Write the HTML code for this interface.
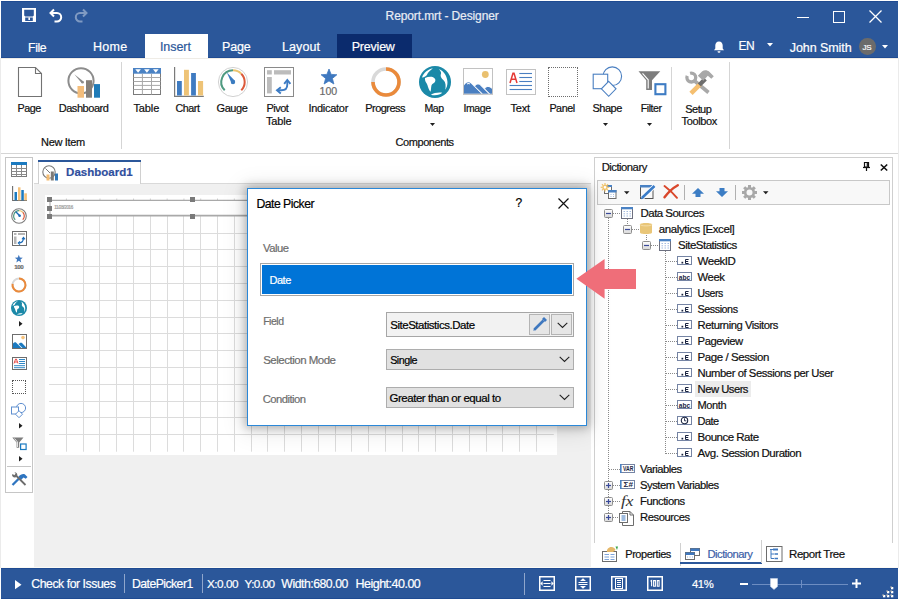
<!DOCTYPE html>
<html><head><meta charset="utf-8"><style>
*{margin:0;padding:0;box-sizing:border-box}
html,body{width:899px;height:600px;overflow:hidden;background:#fff;font-family:"Liberation Sans",sans-serif;position:relative}
.a{position:absolute;display:block}
.t{position:absolute;white-space:nowrap;line-height:1;-webkit-text-stroke:0.2px currentColor}
svg{overflow:visible}
</style></head><body>
<div class="a" style="left:0px;top:0px;width:899px;height:600px;background:#fff;"></div>
<div class="a" style="left:0px;top:58px;width:1px;height:510px;background:#ebebeb;"></div>
<div class="a" style="left:898px;top:58px;width:1px;height:510px;background:#ebebeb;"></div>
<div class="a" style="left:1px;top:1px;width:897px;height:57px;background:#2b579a;"></div>
<div class="a" style="left:1px;top:1px;width:897px;height:1px;background:#1f4b92;"></div>
<div class="a" style="left:1px;top:57px;width:897px;height:1px;background:#1f4b92;"></div>
<div class="a" style="left:1px;top:58px;width:897px;height:1px;background:#efece6;"></div>
<svg class="a" style="left:22px;top:8px;" width="14" height="14" viewBox="0 0 14 14"><path fill="#fff" fill-rule="evenodd" d="M0 0H14V14H0Z M2.2 1.8V7.6L3.2 8.6H10.8L11.8 7.6V1.8Z M3.2 9.6V13H10.8V9.6Z"/><rect x="6.4" y="9.4" width="1.6" height="2.6" fill="#fff"/></svg>
<svg class="a" style="left:49px;top:8px;" width="14" height="14" viewBox="0 0 14 14"><path d="M5 1.5 L1.5 5 L5 8.5 M1.8 5 H8 A4.2 4.2 0 0 1 8 13.4 H5.5" fill="none" stroke="#fff" stroke-width="2"/></svg>
<svg class="a" style="left:74px;top:8px;opacity:.4" width="14" height="14" viewBox="0 0 14 14"><path d="M9 1.5 L12.5 5 L9 8.5 M12.2 5 H6 A4.2 4.2 0 0 0 6 13.4 H8.5" fill="none" stroke="#fff" stroke-width="2"/></svg>
<div class="t" style="left:385.60px;top:10.00px;font-size:12px;color:#e8ecf4;letter-spacing:-0.107px;">Report.mrt - Designer</div>
<div class="a" style="left:797px;top:17px;width:12px;height:1px;background:#fff;"></div>
<div class="a" style="left:833px;top:11px;width:12px;height:12px;border:1px solid #fff;"></div>
<svg class="a" style="left:869px;top:10px;" width="13" height="13" viewBox="0 0 13 13"><path d="M0.5 0.5L12.5 12.5M12.5 0.5L0.5 12.5" stroke="#fff" stroke-width="1.3"/></svg>
<div class="a" style="left:145px;top:34px;width:63px;height:24px;background:#fff;"></div>
<div class="a" style="left:337px;top:34px;width:75px;height:24px;background:#0b2b6d;"></div>
<div class="t" style="left:28.10px;top:42.00px;font-size:12.25px;color:#fff;letter-spacing:-0.450px;">File</div>
<div class="t" style="left:93.00px;top:41.00px;font-size:12.5px;color:#fff;letter-spacing:0.317px;">Home</div>
<div class="t" style="left:159.90px;top:41.00px;font-size:12.5px;color:#2b579a;letter-spacing:-0.050px;">Insert</div>
<div class="t" style="left:222.00px;top:41.00px;font-size:12.5px;color:#fff;letter-spacing:-0.167px;">Page</div>
<div class="t" style="left:282.00px;top:41.00px;font-size:12.5px;color:#fff;letter-spacing:0.090px;">Layout</div>
<div class="t" style="left:351.70px;top:41.00px;font-size:12.5px;color:#fff;letter-spacing:-0.208px;">Preview</div>
<svg class="a" style="left:713px;top:41px;" width="12" height="12" viewBox="0 0 12 12"><path fill="#fff" d="M6 0.5C3.5 0.5 2.3 2.5 2.3 4.5V7.5L1 9.3H11L9.7 7.5V4.5C9.7 2.5 8.5 0.5 6 0.5Z"/><path fill="#fff" d="M4.5 10.2H7.5A1.5 1.5 0 0 1 4.5 10.2Z"/></svg>
<div class="t" style="left:738.40px;top:40.00px;font-size:12.0px;color:#fff;letter-spacing:-0.450px;">EN</div>
<svg class="a" style="left:767px;top:43px;" width="6" height="4" viewBox="0 0 6 4"><path d="M0 0H6L3 3.5Z" fill="#fff"/></svg>
<div class="t" style="left:789.80px;top:42.00px;font-size:12.5px;color:#fff;letter-spacing:-0.072px;">John Smith</div>
<div class="a" style="left:859px;top:38px;width:16.5px;height:16.5px;border-radius:50%;background:#6b6b6b"></div>
<div class="t" style="left:862.50px;top:44.00px;font-size:8px;color:#fff;letter-spacing:-0.350px;">JS</div>
<svg class="a" style="left:882px;top:45px;" width="6" height="4" viewBox="0 0 6 4"><path d="M0 0H6L3 3.5Z" fill="#fff"/></svg>
<div class="a" style="left:1px;top:153px;width:897px;height:1px;background:#d5d5d5;"></div>
<div class="t" style="left:17.60px;top:103.00px;font-size:10.75px;color:#101010;letter-spacing:-0.500px;">Page</div>
<div class="t" style="left:58.70px;top:103.00px;font-size:11px;color:#101010;letter-spacing:-0.450px;">Dashboard</div>
<div class="t" style="left:133.40px;top:103.00px;font-size:11px;color:#101010;letter-spacing:-0.100px;">Table</div>
<div class="t" style="left:175.60px;top:103.00px;font-size:10.75px;color:#101010;letter-spacing:-0.500px;">Chart</div>
<div class="t" style="left:216.50px;top:103.00px;font-size:11px;color:#101010;letter-spacing:-0.412px;">Gauge</div>
<div class="t" style="left:266.60px;top:103.00px;font-size:11px;color:#101010;letter-spacing:-0.562px;">Pivot</div>
<div class="t" style="left:266.00px;top:116.00px;font-size:11px;color:#101010;letter-spacing:-0.200px;">Table</div>
<div class="t" style="left:308.40px;top:103.00px;font-size:11px;color:#101010;letter-spacing:-0.275px;">Indicator</div>
<div class="t" style="left:365.30px;top:103.00px;font-size:11px;color:#101010;letter-spacing:-0.557px;">Progress</div>
<div class="t" style="left:424.50px;top:103.00px;font-size:10.5px;color:#101010;letter-spacing:-0.475px;">Map</div>
<div class="t" style="left:463.50px;top:103.00px;font-size:10.5px;color:#101010;letter-spacing:-0.425px;">Image</div>
<div class="t" style="left:510.50px;top:103.00px;font-size:11px;color:#101010;letter-spacing:-0.217px;">Text</div>
<div class="t" style="left:549.40px;top:103.00px;font-size:10.75px;color:#101010;letter-spacing:-0.450px;">Panel</div>
<div class="t" style="left:592.40px;top:103.00px;font-size:11px;color:#101010;letter-spacing:-0.450px;">Shape</div>
<div class="t" style="left:640.80px;top:103.00px;font-size:10.5px;color:#101010;letter-spacing:-0.450px;">Filter</div>
<div class="t" style="left:685.30px;top:104.00px;font-size:11px;color:#101010;letter-spacing:-0.562px;">Setup</div>
<div class="t" style="left:681.50px;top:116.00px;font-size:11px;color:#101010;letter-spacing:-0.350px;">Toolbox</div>
<div class="t" style="left:41.10px;top:137.00px;font-size:11px;color:#101010;letter-spacing:-0.350px;">New Item</div>
<div class="t" style="left:395.60px;top:137.00px;font-size:11px;color:#101010;letter-spacing:-0.439px;">Components</div>
<div class="a" style="left:121px;top:62px;width:1px;height:87px;background:#d5d5d5;"></div>
<div class="a" style="left:671px;top:67px;width:1px;height:63px;background:#d5d5d5;"></div>
<div class="a" style="left:729px;top:62px;width:1px;height:87px;background:#d5d5d5;"></div>
<svg class="a" style="left:430.0px;top:123px;" width="5" height="3" viewBox="0 0 5 3"><path d="M0 0H5L2.5 3Z" fill="#1e1e1e"/></svg>
<svg class="a" style="left:603.0px;top:123px;" width="5" height="3" viewBox="0 0 5 3"><path d="M0 0H5L2.5 3Z" fill="#1e1e1e"/></svg>
<svg class="a" style="left:647.0px;top:123px;" width="5" height="3" viewBox="0 0 5 3"><path d="M0 0H5L2.5 3Z" fill="#1e1e1e"/></svg>
<svg class="a" style="left:17px;top:66px;" width="27" height="33" viewBox="0 0 27 33"><path d="M1.5 1.5H18.5L24.5 7.5V30.5H1.5Z M18.5 1.5V7.5H24.5" fill="#fff" stroke="#737373" stroke-width="1.1" stroke-linejoin="miter"/></svg>
<svg class="a" style="left:66px;top:66px;" width="36" height="34" viewBox="0 0 36 34"><circle cx="15" cy="14.8" r="12.6" fill="none" stroke="#8c8c8c" stroke-width="2"/><path d="M8.3 8.3L15.8 17.2L17.5 15.4Z" fill="#8c8c8c"/><circle cx="16.6" cy="16.3" r="1.25" fill="#8c8c8c"/><rect x="11.5" y="20" width="6.5" height="11.7" fill="#f4bd7b"/><rect x="20" y="14.2" width="6" height="17.5" fill="#857f79"/><rect x="28" y="18.1" width="6" height="13.6" fill="#1f7bb8"/></svg>
<svg class="a" style="left:133px;top:68px;" width="28" height="27" viewBox="0 0 28 27"><rect x="0.5" y="0.5" width="27" height="26" fill="#fff" stroke="#7a7a7a"/><rect x="0" y="0" width="28" height="5.7" fill="#4a82c4"/><path d="M2.3 1.3H7.9L5.1 4.8Z" fill="#fff"/><path d="M11.1 1.3H16.7L13.9 4.8Z" fill="#fff"/><path d="M20.0 1.3H25.6L22.8 4.8Z" fill="#fff"/><path d="M9.4 5.7V26.5" stroke="#a8a8a8" stroke-width="1"/><path d="M18.5 5.7V26.5" stroke="#a8a8a8" stroke-width="1"/><path d="M0.5 9.5H27.5" stroke="#a8a8a8" stroke-width="1"/><path d="M0.5 13.5H27.5" stroke="#a8a8a8" stroke-width="1"/><path d="M0.5 17.4H27.5" stroke="#a8a8a8" stroke-width="1"/><path d="M0.5 21.5H27.5" stroke="#a8a8a8" stroke-width="1"/></svg>
<svg class="a" style="left:173px;top:66px;" width="32" height="32" viewBox="0 0 32 32"><path d="M1.6 1V30.4H30.8" fill="none" stroke="#7a7a7a" stroke-width="1.2"/><rect x="4" y="15" width="4.8" height="14.5" fill="#3f7bc1"/><rect x="11" y="3.8" width="4.9" height="25.7" fill="#eec376"/><rect x="18.1" y="7" width="4.8" height="22.5" fill="#3f7bc1"/><rect x="25" y="15" width="5.1" height="14.5" fill="#eec376"/></svg>
<svg class="a" style="left:216px;top:65px;" width="34" height="34" viewBox="0 0 34 34"><circle cx="17" cy="17" r="14.6" fill="none" stroke="#d2d2d2" stroke-width="1"/><path d="M8.73 25.27A11.7 11.7 0 0 1 17.00 5.30" fill="none" stroke="#4f9a80" stroke-width="2"/><path d="M17.00 5.30A11.7 11.7 0 0 1 25.27 8.73" fill="none" stroke="#ecc46e" stroke-width="2"/><path d="M25.27 8.73A11.7 11.7 0 0 1 25.27 25.27" fill="none" stroke="#dc5a3b" stroke-width="2"/><path d="M10.7 7.199999999999999L18.8 15.8L15.8 18.8Z" fill="#3b7cc0"/><circle cx="17" cy="17" r="2.2" fill="#3b7cc0"/></svg>
<svg class="a" style="left:264px;top:67px;" width="30" height="30" viewBox="0 0 30 30"><rect x="0.5" y="0.5" width="29" height="29" fill="#fff" stroke="#8a8a8a"/><rect x="3" y="3.2" width="4.8" height="4.3" fill="#bcbcbc"/><rect x="10" y="3.2" width="17" height="4.3" fill="#bcbcbc"/><rect x="3" y="10" width="4.8" height="16.4" fill="#bcbcbc"/><path d="M23.3 14V17.5C23.3 21 21.5 23.3 17.5 23.3H13.5" fill="none" stroke="#3d7cc4" stroke-width="1.9"/><path d="M20.2 16.8L23.3 13L26.4 16.8" fill="none" stroke="#3d7cc4" stroke-width="1.9"/><path d="M16.8 20.2L13 23.3L16.8 26.4" fill="none" stroke="#3d7cc4" stroke-width="1.9"/></svg>
<svg class="a" style="left:320px;top:68px;" width="18" height="18" viewBox="0 0 18 18"><path d="M9.00,1.00 L6.88,6.39 L1.11,6.74 L5.58,10.41 L4.12,16.01 L9.00,12.90 L13.88,16.01 L12.42,10.41 L16.89,6.74 L11.12,6.39Z" fill="#3f78bf" stroke="#3f78bf" stroke-width="0.8" stroke-linejoin="round"/></svg>
<div class="t" style="left:319.60px;top:86.00px;font-size:10.6px;color:#6a6a6a;letter-spacing:-0.050px;">100</div>
<svg class="a" style="left:371px;top:66.7px;" width="30" height="30" viewBox="0 0 30 30"><circle cx="15" cy="15" r="13" fill="none" stroke="#d9d9d9" stroke-width="3.6"/><path d="M15.00 2.00A13 13 0 1 1 2.00 15.02" fill="none" stroke="#ea8a3b" stroke-width="3.6"/></svg>
<svg class="a" style="left:419px;top:66px;" width="32" height="32" viewBox="0 0 32 32"><circle cx="16.00" cy="16.00" r="16.00" fill="#1b89a8"/><path fill="#fff" d="M 3.00 11.47 C 4.67 6.67 8.67 3.33 13.87 2.13 C 11.00 4.53 9.00 6.00 8.00 8.67 C 7.33 10.13 5.33 11.07 3.00 11.47 Z M 6.00 12.00 C 8.67 10.80 11.67 10.33 14.13 11.20 C 16.33 12.13 17.00 14.13 15.87 16.00 C 14.80 17.47 13.20 17.47 12.53 19.20 C 11.87 21.47 12.27 24.00 11.47 25.67 C 9.87 24.00 9.07 21.47 8.40 19.07 C 7.73 16.80 6.00 15.47 6.00 13.47 Z M 20.00 3.07 C 24.80 5.20 28.13 10.00 28.47 16.00 C 28.60 19.33 27.60 22.00 26.13 23.87 C 27.07 20.13 26.80 16.13 24.53 14.13 C 22.13 12.13 21.33 10.53 21.73 8.80 C 22.67 6.80 21.87 5.47 20.00 3.07 Z M 11.87 28.67 C 14.67 27.20 19.33 26.13 23.20 26.80 C 21.60 28.80 16.00 29.87 11.87 28.67 Z"/></svg>
<svg class="a" style="left:463px;top:68px;" width="30" height="27" viewBox="0 0 30 27"><rect x="0.5" y="0.5" width="29" height="25.8" fill="#fff" stroke="#c2c2c2"/><circle cx="22.3" cy="6.5" r="3.4" fill="#e9c06f"/><path d="M1 17.4C2.5 15 4 14.2 5.5 14.2C6.5 14.2 7.3 14.8 8 15.5L18.5 25.8H1Z" fill="#4a7fc1"/><path d="M11.5 18.2C12.5 16.6 14 16 15.2 16C16.3 16 17 16.6 17.8 17.4L26.8 26.3H19.8Z" fill="#4a7fc1" stroke="#fff" stroke-width="1"/><path d="M21.5 20.8C22.5 19.2 24 18.4 25 18.4C26.5 18.4 28 19.5 29.5 20.8V26.3H27Z" fill="#4a7fc1" stroke="#fff" stroke-width="1"/><path d="M3.6 15.8L5.5 14.7L7.2 15.8L6.2 16.4L5.4 15.8L4.6 16.5Z" fill="#fff"/><rect x="0.5" y="0.5" width="29" height="25.8" fill="none" stroke="#c2c2c2"/></svg>
<svg class="a" style="left:506px;top:69px;" width="30" height="27" viewBox="0 0 30 27"><rect x="0.5" y="0.5" width="29" height="25" fill="#fff" stroke="#c2c2c2"/><path d="M4 14L7 4.2H8L11 14M5.1 10.3H9.9" fill="none" stroke="#e53935" stroke-width="1.5"/><path d="M13.3 4.5H26" stroke="#4a7fc1" stroke-width="1.1"/><path d="M13.3 8.5H26" stroke="#4a7fc1" stroke-width="1.1"/><path d="M13.3 12.5H26" stroke="#4a7fc1" stroke-width="1.1"/><path d="M3.6 16.5H26" stroke="#4a7fc1" stroke-width="1.1"/><path d="M3.6 20.5H26" stroke="#4a7fc1" stroke-width="1.1"/></svg>
<div class="a" style="left:548px;top:67px;width:30px;height:30px;border:1px dotted #6d6d6d;"></div>
<svg class="a" style="left:591px;top:66px;" width="32" height="32" viewBox="0 0 32 32"><circle cx="21.3" cy="10.2" r="9.3" fill="#fff" stroke="#4a7fc1" stroke-width="1.1"/><rect x="2.2" y="8.2" width="14.5" height="14.5" fill="#fff" stroke="#4a7fc1" stroke-width="1.1"/><path d="M17.7 15.3L25 22.8L17.7 30.3L10.4 22.8Z" fill="#fff" stroke="#4a7fc1" stroke-width="1.1"/></svg>
<svg class="a" style="left:638px;top:70px;" width="29" height="27" viewBox="0 0 29 27"><path d="M0.5 1.3H22.3L14 10.3V20.1H8.2V10.3Z" fill="#7d7d7d"/><path d="M4.5 3.3L10.2 9.8V18.5" fill="none" stroke="#fff" stroke-width="1.1"/><rect x="17.4" y="14.2" width="10" height="10" fill="#fff" stroke="#3e7cc4" stroke-width="2.1"/></svg>
<svg class="a" style="left:684.5px;top:69.8px;" width="29" height="25" viewBox="0 0 29 25"><path d="M8.5 10L23.5 22.5" stroke="#a8a8a8" stroke-width="3.6"/><circle cx="6.3" cy="7.6" r="4.4" fill="none" stroke="#a8a8a8" stroke-width="3.3"/><path d="M6.3 7.6L-1 4.5L3.8 -1Z" fill="#fff"/><path d="M6 23.3L15.5 13.8" stroke="#f5bf70" stroke-width="4.6"/><path d="M14.3 15L20.3 9" stroke="#6d6d6d" stroke-width="4.3"/><path d="M12.8 5.8L17 1.5C19.5 -0.3 22.3 0.2 24.3 1.8L28.8 6.3L26.3 8.8L22.8 5.8L18.3 10.8Z" fill="#a8a8a8"/></svg>
<div class="a" style="left:5px;top:157px;width:28px;height:336px;background:#fff;border:1px solid #c6c6c6;"></div>
<svg class="a" style="left:11px;top:162px;" width="16" height="15" viewBox="0 0 16 15"><rect x="0.5" y="0.5" width="15" height="14" fill="#fff" stroke="#7a7a7a"/><rect x="0" y="0" width="16" height="3" fill="#1b7ac0"/><path d="M5.5 3V14.5" stroke="#8a8a8a"/><path d="M10.5 3V14.5" stroke="#8a8a8a"/><path d="M0.5 6.5H15.5" stroke="#8a8a8a"/><path d="M0.5 9.5H15.5" stroke="#8a8a8a"/><path d="M0.5 12.5H15.5" stroke="#8a8a8a"/></svg>
<svg class="a" style="left:12px;top:185.5px;" width="15" height="15" viewBox="0 0 15 15"><path d="M0.6 0V14.5H15" fill="none" stroke="#6d6d6d" stroke-width="1.1"/><rect x="2.5" y="6" width="2.5" height="8.3" fill="#1b7ac0"/><rect x="6" y="1.3" width="2.5" height="13" fill="#f6c27b"/><rect x="9.3" y="4" width="2.5" height="10.3" fill="#1b7ac0"/><rect x="12.3" y="7.3" width="2.6" height="7" fill="#f6c27b"/></svg>
<svg class="a" style="left:11px;top:208px;" width="16" height="16" viewBox="0 0 16 16"><circle cx="8" cy="8" r="7.3" fill="none" stroke="#7d7d7d" stroke-width="1.1"/><path d="M4.25 11.75A5.3 5.3 0 0 1 8.00 2.70" fill="none" stroke="#4f9a80" stroke-width="1.2"/><path d="M8.00 2.70A5.3 5.3 0 0 1 11.75 4.25" fill="none" stroke="#ecc46e" stroke-width="1.2"/><path d="M11.75 4.25A5.3 5.3 0 0 1 11.75 11.75" fill="none" stroke="#dc5a3b" stroke-width="1.2"/><path d="M4.8 3.8L9 8" stroke="#1b6bb8" stroke-width="1.4"/><circle cx="8.6" cy="7.8" r="1.3" fill="#1b6bb8"/></svg>
<svg class="a" style="left:12px;top:231px;" width="15" height="15" viewBox="0 0 15 15"><rect x="0.5" y="0.5" width="14" height="14" fill="#fff" stroke="#6d6d6d"/><rect x="2" y="2" width="2.5" height="2" fill="#b5b5b5"/><rect x="6" y="2" width="7" height="2" fill="#b5b5b5"/><rect x="2" y="5.5" width="2.5" height="7.5" fill="#b5b5b5"/><path d="M6.5 12C9.5 12 11.5 10.5 11.5 7" fill="none" stroke="#1b6bb8" stroke-width="1.2"/><path d="M10 8.3L11.5 6.3L13 8.3" fill="none" stroke="#1b6bb8" stroke-width="1.1"/><path d="M8 10.5L6.3 12L8 13.5" fill="none" stroke="#1b6bb8" stroke-width="1.1"/></svg>
<svg class="a" style="left:14px;top:255px;" width="10" height="8" viewBox="0 0 10 8"><path d="M4.80,-0.20 L3.74,2.54 L0.81,2.70 L3.09,4.56 L2.33,7.40 L4.80,5.80 L7.27,7.40 L6.51,4.56 L8.79,2.70 L5.86,2.54Z" fill="#3f78bf"/></svg>
<div class="t" style="left:14.30px;top:264.00px;font-size:6.25px;color:#6d6d6d;letter-spacing:-0.475px;font-weight:bold;">100</div>
<svg class="a" style="left:11px;top:277px;" width="16" height="16" viewBox="0 0 16 16"><circle cx="8" cy="8" r="6.5" fill="none" stroke="#d9d9d9" stroke-width="2"/><path d="M8.00 1.50A6.5 6.5 0 1 1 1.60 6.87" fill="none" stroke="#ea8a3b" stroke-width="2"/></svg>
<svg class="a" style="left:11px;top:299.5px;" width="16" height="16" viewBox="0 0 16 16"><circle cx="8.00" cy="8.00" r="8.00" fill="#1b89a8"/><path fill="#fff" d="M 1.50 5.73 C 2.33 3.33 4.33 1.67 6.93 1.07 C 5.50 2.27 4.50 3.00 4.00 4.33 C 3.67 5.07 2.67 5.53 1.50 5.73 Z M 3.00 6.00 C 4.33 5.40 5.83 5.17 7.07 5.60 C 8.17 6.07 8.50 7.07 7.93 8.00 C 7.40 8.73 6.60 8.73 6.27 9.60 C 5.93 10.73 6.13 12.00 5.73 12.83 C 4.93 12.00 4.53 10.73 4.20 9.53 C 3.87 8.40 3.00 7.73 3.00 6.73 Z M 10.00 1.53 C 12.40 2.60 14.07 5.00 14.23 8.00 C 14.30 9.67 13.80 11.00 13.07 11.93 C 13.53 10.07 13.40 8.07 12.27 7.07 C 11.07 6.07 10.67 5.27 10.87 4.40 C 11.33 3.40 10.93 2.73 10.00 1.53 Z M 5.93 14.33 C 7.33 13.60 9.67 13.07 11.60 13.40 C 10.80 14.40 8.00 14.93 5.93 14.33 Z"/></svg>
<svg class="a" style="left:19.3px;top:320.5px;" width="4" height="6" viewBox="0 0 4 6"><path d="M0 0L3.5 2.7L0 5.4Z" fill="#1e1e1e"/></svg>
<svg class="a" style="left:12px;top:334px;" width="15" height="15" viewBox="0 0 15 15"><rect x="0.5" y="0.5" width="14" height="14" fill="#fff" stroke="#6d6d6d"/><circle cx="11" cy="3.6" r="1.8" fill="#f6c27b"/><path d="M1 14V9.5C2 8.5 3 8 4 8.5L9.5 14Z M6.5 10L8.3 8.8C9 8.5 9.6 8.6 10 9L14 13.2V14H10.5Z" fill="#1b7ac0"/></svg>
<svg class="a" style="left:12px;top:357px;" width="15" height="13" viewBox="0 0 15 13"><rect x="0.5" y="0.5" width="14" height="12" fill="#fff" stroke="#6d6d6d"/><path d="M2 6.5L3.6 2H4.4L6 6.5M2.6 5H5.4" fill="none" stroke="#e53935" stroke-width="0.9"/><path d="M7 2.5H13M7 4.5H13M7 6.5H13M2 8.7H13M2 10.7H13" stroke="#1b7ac0" stroke-width="0.9"/></svg>
<div class="a" style="left:12px;top:380px;width:14px;height:14px;border:1px dotted #555;"></div>
<svg class="a" style="left:11px;top:402.5px;" width="15" height="15" viewBox="0 0 15 15"><circle cx="10" cy="5" r="4.6" fill="#fff" stroke="#5f8fd0" stroke-width="1"/><rect x="0.5" y="4" width="7" height="7" fill="#fff" stroke="#5f8fd0" stroke-width="1"/><path d="M8 7.7L11.5 11.2L8 14.7L4.5 11.2Z" fill="#fff" stroke="#5f8fd0" stroke-width="1"/></svg>
<svg class="a" style="left:19.3px;top:423px;" width="4" height="6" viewBox="0 0 4 6"><path d="M0 0L3.5 2.7L0 5.4Z" fill="#1e1e1e"/></svg>
<svg class="a" style="left:12px;top:437px;" width="15" height="13" viewBox="0 0 15 13"><path d="M0.3 0.5H11.5L7.2 5.5V10.8H4.6V5.5Z" fill="#7d7d7d"/><path d="M2.5 1.5L5.5 5V10" fill="none" stroke="#fff" stroke-width="0.8"/><rect x="8.6" y="7" width="5.5" height="5.5" fill="#fff" stroke="#1b7ac0" stroke-width="1.2"/></svg>
<svg class="a" style="left:19.3px;top:456px;" width="4" height="6" viewBox="0 0 4 6"><path d="M0 0L3.5 2.7L0 5.4Z" fill="#1e1e1e"/></svg>
<div class="a" style="left:7px;top:466px;width:24px;height:1px;background:#c6c6c6;"></div>
<svg class="a" style="left:10.5px;top:471.5px;" width="17" height="14" viewBox="0 0 17 14"><path d="M1.5 13L9 5.5" stroke="#2e75c0" stroke-width="2.3"/><path d="M7.5 4.5C9.5 2.5 12 1.5 14 2.5L16.5 5L14.8 6.8L12.5 5.5L10 8Z" fill="#2e75c0"/><path d="M4 2.5L14.5 13" stroke="#6d6d6d" stroke-width="1.8"/><path d="M1 2.3C0.8 4 2 5.5 3.8 5.5C5.3 5.5 6.3 4.3 6.3 2.8C6.3 1.2 5 0.2 3.5 0.3L4.8 2L4 3.2L2.2 2.5Z" fill="#6d6d6d"/></svg>
<div class="a" style="left:34px;top:183px;width:557px;height:384px;background:#f0f0f0;"></div>
<div class="a" style="left:1px;top:567px;width:897px;height:1px;background:#fcfbf6;"></div>
<div class="a" style="left:34px;top:183px;width:557px;height:1px;background:#d9d9d9;"></div>
<div class="a" style="left:38px;top:160px;width:103px;height:24px;background:#fff;border:1px solid #d0d0d0;border-top:none;border-bottom:none"></div>
<div class="a" style="left:38px;top:160px;width:103px;height:2px;background:#2b579a;"></div>
<svg class="a" style="left:42px;top:164.5px;" width="17" height="16" viewBox="0 0 17 16"><circle cx="7" cy="7" r="6.2" fill="none" stroke="#7a7a7a" stroke-width="1.1"/><path d="M3.5 3.5L8 8" stroke="#7a7a7a" stroke-width="1"/><rect x="4.5" y="9.5" width="3" height="6" fill="#f3bc73"/><rect x="8.8" y="6.5" width="3" height="9" fill="#7d7a77"/><rect x="13" y="8.5" width="3" height="7" fill="#2f77b8"/></svg>
<div class="t" style="left:66.10px;top:167.00px;font-size:11.5px;color:#2f4f9e;font-weight:bold;">Dashboard1</div>
<div class="a" style="left:45px;top:195px;width:512px;height:260px;background:#fff;"></div>
<svg class="a" style="left:45px;top:194px;" width="512" height="261" viewBox="0 0 512 261"><rect x="21" y="22" width="1" height="235.7" fill="#dcdcdc"/><rect x="38" y="22" width="1" height="235.7" fill="#dcdcdc"/><rect x="54" y="22" width="1" height="235.7" fill="#dcdcdc"/><rect x="71" y="22" width="1" height="235.7" fill="#dcdcdc"/><rect x="88" y="22" width="1" height="235.7" fill="#dcdcdc"/><rect x="105" y="22" width="1" height="235.7" fill="#dcdcdc"/><rect x="122" y="22" width="1" height="235.7" fill="#dcdcdc"/><rect x="138" y="22" width="1" height="235.7" fill="#dcdcdc"/><rect x="155" y="22" width="1" height="235.7" fill="#dcdcdc"/><rect x="172" y="22" width="1" height="235.7" fill="#dcdcdc"/><rect x="189" y="22" width="1" height="235.7" fill="#dcdcdc"/><rect x="206" y="22" width="1" height="235.7" fill="#dcdcdc"/><rect x="222" y="22" width="1" height="235.7" fill="#dcdcdc"/><rect x="239" y="22" width="1" height="235.7" fill="#dcdcdc"/><rect x="256" y="22" width="1" height="235.7" fill="#dcdcdc"/><rect x="273" y="22" width="1" height="235.7" fill="#dcdcdc"/><rect x="290" y="22" width="1" height="235.7" fill="#dcdcdc"/><rect x="306" y="22" width="1" height="235.7" fill="#dcdcdc"/><rect x="323" y="22" width="1" height="235.7" fill="#dcdcdc"/><rect x="340" y="22" width="1" height="235.7" fill="#dcdcdc"/><rect x="357" y="22" width="1" height="235.7" fill="#dcdcdc"/><rect x="373" y="22" width="1" height="235.7" fill="#dcdcdc"/><rect x="390" y="22" width="1" height="235.7" fill="#dcdcdc"/><rect x="407" y="22" width="1" height="235.7" fill="#dcdcdc"/><rect x="424" y="22" width="1" height="235.7" fill="#dcdcdc"/><rect x="441" y="22" width="1" height="235.7" fill="#dcdcdc"/><rect x="457" y="22" width="1" height="235.7" fill="#dcdcdc"/><rect x="474" y="22" width="1" height="235.7" fill="#dcdcdc"/><rect x="491" y="22" width="1" height="235.7" fill="#dcdcdc"/><rect x="4" y="39" width="504.8" height="1" fill="#dcdcdc"/><rect x="4" y="55" width="504.8" height="1" fill="#dcdcdc"/><rect x="4" y="72" width="504.8" height="1" fill="#dcdcdc"/><rect x="4" y="89" width="504.8" height="1" fill="#dcdcdc"/><rect x="4" y="106" width="504.8" height="1" fill="#dcdcdc"/><rect x="4" y="123" width="504.8" height="1" fill="#dcdcdc"/><rect x="4" y="139" width="504.8" height="1" fill="#dcdcdc"/><rect x="4" y="156" width="504.8" height="1" fill="#dcdcdc"/><rect x="4" y="173" width="504.8" height="1" fill="#dcdcdc"/><rect x="4" y="190" width="504.8" height="1" fill="#dcdcdc"/><rect x="4" y="207" width="504.8" height="1" fill="#dcdcdc"/><rect x="4" y="223" width="504.8" height="1" fill="#dcdcdc"/><rect x="4" y="240" width="504.8" height="1" fill="#dcdcdc"/><path d="M21.40 4.5V6.3" stroke="#d0d0d0" stroke-width="1"/><path d="M38.19 4.5V6.3" stroke="#d0d0d0" stroke-width="1"/><path d="M54.98 4.5V6.3" stroke="#d0d0d0" stroke-width="1"/><path d="M71.77 4.5V6.3" stroke="#d0d0d0" stroke-width="1"/><path d="M88.56 4.5V6.3" stroke="#d0d0d0" stroke-width="1"/><path d="M105.35 4.5V6.3" stroke="#d0d0d0" stroke-width="1"/><path d="M122.14 4.5V6.3" stroke="#d0d0d0" stroke-width="1"/><path d="M138.93 4.5V6.3" stroke="#d0d0d0" stroke-width="1"/><path d="M155.72 4.5V6.3" stroke="#d0d0d0" stroke-width="1"/><path d="M172.51 4.5V6.3" stroke="#d0d0d0" stroke-width="1"/><path d="M189.30 4.5V6.3" stroke="#d0d0d0" stroke-width="1"/><path d="M206.09 4.5V6.3" stroke="#d0d0d0" stroke-width="1"/><path d="M222.88 4.5V6.3" stroke="#d0d0d0" stroke-width="1"/><path d="M239.67 4.5V6.3" stroke="#d0d0d0" stroke-width="1"/><path d="M256.46 4.5V6.3" stroke="#d0d0d0" stroke-width="1"/><path d="M273.25 4.5V6.3" stroke="#d0d0d0" stroke-width="1"/><path d="M290.04 4.5V6.3" stroke="#d0d0d0" stroke-width="1"/><path d="M306.83 4.5V6.3" stroke="#d0d0d0" stroke-width="1"/><path d="M323.62 4.5V6.3" stroke="#d0d0d0" stroke-width="1"/><path d="M340.41 4.5V6.3" stroke="#d0d0d0" stroke-width="1"/><path d="M357.20 4.5V6.3" stroke="#d0d0d0" stroke-width="1"/><path d="M373.99 4.5V6.3" stroke="#d0d0d0" stroke-width="1"/><path d="M390.78 4.5V6.3" stroke="#d0d0d0" stroke-width="1"/><path d="M407.57 4.5V6.3" stroke="#d0d0d0" stroke-width="1"/><path d="M424.36 4.5V6.3" stroke="#d0d0d0" stroke-width="1"/><path d="M441.15 4.5V6.3" stroke="#d0d0d0" stroke-width="1"/><path d="M457.94 4.5V6.3" stroke="#d0d0d0" stroke-width="1"/><path d="M474.73 4.5V6.3" stroke="#d0d0d0" stroke-width="1"/><path d="M491.52 4.5V6.3" stroke="#d0d0d0" stroke-width="1"/><path d="M5 6.3H512" stroke="#a9a9a9" stroke-width="1.3"/><path d="M5 21.7H512" stroke="#a9a9a9" stroke-width="1.8"/><path d="M5 6V21.5" stroke="#a0a0a0" stroke-width="1"/><rect x="2" y="3" width="5" height="5" fill="#7a7a7a"/><rect x="2" y="12" width="5" height="5" fill="#7a7a7a"/><rect x="2" y="20" width="5" height="5" fill="#7a7a7a"/><rect x="145" y="3" width="5" height="5" fill="#7a7a7a"/><rect x="145" y="20" width="5" height="5" fill="#7a7a7a"/></svg>
<div class="t" style="left:54.20px;top:206.00px;font-size:4.5px;color:#a0a0a0;letter-spacing:-0.356px;">11/28/2016</div>
<div class="a" style="left:594px;top:157px;width:299px;height:386px;background:#fff;border:1px solid #cfcfcf;border-bottom:none"></div>
<div class="t" style="left:601.70px;top:162.00px;font-size:11.25px;color:#101010;letter-spacing:-0.494px;">Dictionary</div>
<svg class="a" style="left:863px;top:162px;" width="7" height="9" viewBox="0 0 7 9"><path d="M1.5 0.5H5.5V5H1.5Z" fill="none" stroke="#111" stroke-width="1.2"/><path d="M4.3 0.8V4.8" stroke="#111" stroke-width="1.2"/><path d="M0 5.5H7" stroke="#111" stroke-width="1.2"/><path d="M3.5 5.5V9" stroke="#111" stroke-width="1.2"/></svg>
<svg class="a" style="left:880px;top:164px;" width="8" height="7" viewBox="0 0 8 7"><path d="M0.8 0.5L7.2 6.5M7.2 0.5L0.8 6.5" stroke="#111" stroke-width="1.6"/></svg>
<div class="a" style="left:597px;top:180px;width:293px;height:25px;background:#f8f8f8;border:1px solid #c8c8c8;"></div>
<svg class="a" style="left:598px;top:180px;" width="20" height="20" viewBox="0 0 20 20"><rect x="6.5" y="5.5" width="7" height="8" fill="#fff" stroke="#6d6d6d"/><rect x="6" y="5" width="8" height="2" fill="#4a82c4"/><rect x="10.5" y="10.5" width="7.5" height="8" fill="#fff" stroke="#6d6d6d"/><rect x="10" y="10" width="8.5" height="2.5" fill="#4a82c4"/><path d="M12.5 14.5H13.5M15 14.5H16M12.5 16.5H13.5M15 16.5H16" stroke="#9ab4de" stroke-width="0.9"/><circle cx="7" cy="7.3" r="2" fill="#fff" stroke="#f2c46a" stroke-width="1.3"/><rect x="6.4" y="3" width="1.2" height="2" fill="#f2c46a" transform="rotate(0 7 7.3)"/><rect x="6.4" y="3" width="1.2" height="2" fill="#f2c46a" transform="rotate(45 7 7.3)"/><rect x="6.4" y="3" width="1.2" height="2" fill="#f2c46a" transform="rotate(90 7 7.3)"/><rect x="6.4" y="3" width="1.2" height="2" fill="#f2c46a" transform="rotate(135 7 7.3)"/><rect x="6.4" y="3" width="1.2" height="2" fill="#f2c46a" transform="rotate(180 7 7.3)"/><rect x="6.4" y="3" width="1.2" height="2" fill="#f2c46a" transform="rotate(225 7 7.3)"/><rect x="6.4" y="3" width="1.2" height="2" fill="#f2c46a" transform="rotate(270 7 7.3)"/><rect x="6.4" y="3" width="1.2" height="2" fill="#f2c46a" transform="rotate(315 7 7.3)"/></svg>
<svg class="a" style="left:623.5px;top:191px;" width="6" height="4" viewBox="0 0 6 4"><path d="M0 0.3H5.5L2.75 3.3Z" fill="#1e1e1e"/></svg>
<svg class="a" style="left:639px;top:184px;" width="17" height="16" viewBox="0 0 17 16"><rect x="1.5" y="1.5" width="12.5" height="13" fill="none" stroke="#555" stroke-width="1"/><rect x="1" y="1" width="13.5" height="2.5" fill="#4a82c4"/><path d="M3 14L15.5 2" stroke="#fff" stroke-width="4.4"/><path d="M3.2 13.8L15.5 2" stroke="#3a7cc8" stroke-width="2.6"/><path d="M2 15.3L2.6 12.6L4.6 14.5Z" fill="#3a7cc8"/></svg>
<svg class="a" style="left:663px;top:184px;" width="16" height="15" viewBox="0 0 16 15"><path d="M1.5 13.3C5 8.5 9 4.5 14.8 1.2" fill="none" stroke="#d9472b" stroke-width="2.4" stroke-linecap="round"/><path d="M1.5 2C6 5.5 10.5 9.5 14 13.8" fill="none" stroke="#d9472b" stroke-width="1.9" stroke-linecap="round"/></svg>
<div class="a" style="left:684px;top:185px;width:1px;height:15px;background:#b0b0b0;"></div>
<svg class="a" style="left:692px;top:188px;" width="12" height="9" viewBox="0 0 12 9"><path d="M0 5.8L6 0L12 5.8H8.5V9H3.5V5.8Z" fill="#3c7dc4"/></svg>
<svg class="a" style="left:716px;top:188px;" width="12" height="9" viewBox="0 0 12 9"><path d="M0 3.2L6 9L12 3.2H8.5V0H3.5V3.2Z" fill="#3c7dc4"/></svg>
<div class="a" style="left:735px;top:185px;width:1px;height:15px;background:#b0b0b0;"></div>
<svg class="a" style="left:741.5px;top:184.5px;" width="15" height="15" viewBox="0 0 15 15"><circle cx="7.5" cy="7.5" r="4.3" fill="none" stroke="#a8a8a8" stroke-width="2.6"/><rect x="6" y="0" width="3" height="3.5" fill="#a8a8a8" transform="rotate(0 7.5 7.5)"/><rect x="6" y="0" width="3" height="3.5" fill="#a8a8a8" transform="rotate(45 7.5 7.5)"/><rect x="6" y="0" width="3" height="3.5" fill="#a8a8a8" transform="rotate(90 7.5 7.5)"/><rect x="6" y="0" width="3" height="3.5" fill="#a8a8a8" transform="rotate(135 7.5 7.5)"/><rect x="6" y="0" width="3" height="3.5" fill="#a8a8a8" transform="rotate(180 7.5 7.5)"/><rect x="6" y="0" width="3" height="3.5" fill="#a8a8a8" transform="rotate(225 7.5 7.5)"/><rect x="6" y="0" width="3" height="3.5" fill="#a8a8a8" transform="rotate(270 7.5 7.5)"/><rect x="6" y="0" width="3" height="3.5" fill="#a8a8a8" transform="rotate(315 7.5 7.5)"/></svg>
<svg class="a" style="left:762.5px;top:191px;" width="6" height="4" viewBox="0 0 6 4"><path d="M0 0.3H5.5L2.75 3.3Z" fill="#1e1e1e"/></svg>
<svg width="0" height="0" style="position:absolute"><defs><linearGradient id="eg" x1="0" y1="0" x2="0" y2="1"><stop offset="0" stop-color="#fff"/><stop offset="1" stop-color="#d8d8d8"/></linearGradient></defs></svg>
<div class="a" style="left:608px;top:218px;width:1px;height:299px;background-image:linear-gradient(180deg,#8a8a8a 50%,transparent 50%);background-size:1px 2px"></div>
<svg class="a" style="left:604px;top:209px;" width="9" height="9" viewBox="0 0 9 9"><rect x="0.5" y="0.5" width="8" height="8" rx="1" fill="url(#eg)" stroke="#8e8e8e"/><path d="M2 4.5H7" stroke="#3a4a9a" stroke-width="1.2"/></svg>
<div class="a" style="left:613px;top:213px;width:8px;height:1px;background-image:linear-gradient(90deg,#8a8a8a 50%,transparent 50%);background-size:2px 1px"></div>
<svg class="a" style="left:621px;top:207px;" width="12" height="12" viewBox="0 0 12 12"><rect x="0.5" y="0.5" width="11" height="11" fill="#fff" stroke="#6d7080"/><rect x="0" y="0" width="12" height="2.3" fill="#4a82c4"/><path d="M2.5 4.5H4M5.5 4.5H7M8.5 4.5H10M2.5 6.8H4M5.5 6.8H7M8.5 6.8H10M2.5 9H4M5.5 9H7M8.5 9H10" stroke="#9ab4de" stroke-width="0.9"/></svg>
<div class="t" style="left:640.50px;top:208.00px;font-size:11.5px;color:#101010;letter-spacing:-0.527px;">Data Sources</div>
<div class="a" style="left:627px;top:219px;width:1px;height:6px;background-image:linear-gradient(180deg,#8a8a8a 50%,transparent 50%);background-size:1px 2px"></div>
<svg class="a" style="left:623px;top:225px;" width="9" height="9" viewBox="0 0 9 9"><rect x="0.5" y="0.5" width="8" height="8" rx="1" fill="url(#eg)" stroke="#8e8e8e"/><path d="M2 4.5H7" stroke="#3a4a9a" stroke-width="1.2"/></svg>
<div class="a" style="left:632px;top:229px;width:8px;height:1px;background-image:linear-gradient(90deg,#8a8a8a 50%,transparent 50%);background-size:2px 1px"></div>
<svg class="a" style="left:640px;top:222px;" width="12" height="13" viewBox="0 0 12 13"><path d="M0 2.5C0 0.5 12 0.5 12 2.5V10.5C12 12.5 0 12.5 0 10.5Z" fill="#e9c678"/><path d="M0 2.5C0 4.3 12 4.3 12 2.5" fill="none" stroke="#f6e2b4" stroke-width="0.8"/></svg>
<div class="t" style="left:658.80px;top:224.00px;font-size:11.5px;color:#101010;letter-spacing:-0.403px;">analytics [Excel]</div>
<div class="a" style="left:646px;top:235px;width:1px;height:6px;background-image:linear-gradient(180deg,#8a8a8a 50%,transparent 50%);background-size:1px 2px"></div>
<svg class="a" style="left:642px;top:241px;" width="9" height="9" viewBox="0 0 9 9"><rect x="0.5" y="0.5" width="8" height="8" rx="1" fill="url(#eg)" stroke="#8e8e8e"/><path d="M2 4.5H7" stroke="#3a4a9a" stroke-width="1.2"/></svg>
<div class="a" style="left:651px;top:245px;width:8px;height:1px;background-image:linear-gradient(90deg,#8a8a8a 50%,transparent 50%);background-size:2px 1px"></div>
<svg class="a" style="left:659px;top:239px;" width="12" height="12" viewBox="0 0 12 12"><rect x="0.5" y="0.5" width="11" height="11" fill="#fff" stroke="#6d7080"/><rect x="0" y="0" width="12" height="2.3" fill="#4a82c4"/><path d="M2.5 4.5H4M5.5 4.5H7M8.5 4.5H10M2.5 6.8H4M5.5 6.8H7M8.5 6.8H10M2.5 9H4M5.5 9H7M8.5 9H10" stroke="#9ab4de" stroke-width="0.9"/></svg>
<div class="t" style="left:678.10px;top:240.00px;font-size:11.5px;color:#101010;letter-spacing:-0.519px;">SiteStatistics</div>
<div class="a" style="left:665px;top:251px;width:1px;height:203px;background-image:linear-gradient(180deg,#8a8a8a 50%,transparent 50%);background-size:1px 2px"></div>
<div class="a" style="left:666px;top:261px;width:11px;height:1px;background-image:linear-gradient(90deg,#8a8a8a 50%,transparent 50%);background-size:2px 1px"></div>
<svg class="a" style="left:677px;top:256px;" width="15" height="9" viewBox="0 0 15 9"><rect x="0.5" y="0.5" width="14" height="8" fill="#fff" stroke="#7584a4"/><rect x="4.5" y="5.8" width="1.7" height="1.7" fill="#1a2440"/><path d="M11.6 3.5H8.5V7.5H11.6M8.5 5.5H11.2" fill="none" stroke="#1a2440" stroke-width="1"/></svg>
<div class="t" style="left:697.60px;top:256.00px;font-size:11.5px;color:#101010;letter-spacing:-0.480px;">WeekID</div>
<div class="a" style="left:666px;top:277px;width:11px;height:1px;background-image:linear-gradient(90deg,#8a8a8a 50%,transparent 50%);background-size:2px 1px"></div>
<svg class="a" style="left:677px;top:272px;" width="15" height="9" viewBox="0 0 15 9"><rect x="0.5" y="0.5" width="14" height="8" fill="#fff" stroke="#7584a4"/><text x="1.8" y="7.5" font-size="8" font-family="Liberation Sans" fill="#1a2440" font-weight="bold" textLength="11.4" lengthAdjust="spacingAndGlyphs">abc</text></svg>
<div class="t" style="left:697.60px;top:272.00px;font-size:11.25px;color:#101010;letter-spacing:-0.400px;">Week</div>
<div class="a" style="left:666px;top:293px;width:11px;height:1px;background-image:linear-gradient(90deg,#8a8a8a 50%,transparent 50%);background-size:2px 1px"></div>
<svg class="a" style="left:677px;top:288px;" width="15" height="9" viewBox="0 0 15 9"><rect x="0.5" y="0.5" width="14" height="8" fill="#fff" stroke="#7584a4"/><rect x="4.5" y="5.8" width="1.7" height="1.7" fill="#1a2440"/><path d="M11.6 3.5H8.5V7.5H11.6M8.5 5.5H11.2" fill="none" stroke="#1a2440" stroke-width="1"/></svg>
<div class="t" style="left:697.60px;top:288.00px;font-size:10.5px;color:#101010;letter-spacing:-0.450px;">Users</div>
<div class="a" style="left:666px;top:309px;width:11px;height:1px;background-image:linear-gradient(90deg,#8a8a8a 50%,transparent 50%);background-size:2px 1px"></div>
<svg class="a" style="left:677px;top:304px;" width="15" height="9" viewBox="0 0 15 9"><rect x="0.5" y="0.5" width="14" height="8" fill="#fff" stroke="#7584a4"/><rect x="4.5" y="5.8" width="1.7" height="1.7" fill="#1a2440"/><path d="M11.6 3.5H8.5V7.5H11.6M8.5 5.5H11.2" fill="none" stroke="#1a2440" stroke-width="1"/></svg>
<div class="t" style="left:697.60px;top:304.00px;font-size:10.75px;color:#101010;letter-spacing:-0.457px;">Sessions</div>
<div class="a" style="left:666px;top:325px;width:11px;height:1px;background-image:linear-gradient(90deg,#8a8a8a 50%,transparent 50%);background-size:2px 1px"></div>
<svg class="a" style="left:677px;top:320px;" width="15" height="9" viewBox="0 0 15 9"><rect x="0.5" y="0.5" width="14" height="8" fill="#fff" stroke="#7584a4"/><rect x="4.5" y="5.8" width="1.7" height="1.7" fill="#1a2440"/><path d="M11.6 3.5H8.5V7.5H11.6M8.5 5.5H11.2" fill="none" stroke="#1a2440" stroke-width="1"/></svg>
<div class="t" style="left:697.60px;top:320.00px;font-size:11.25px;color:#101010;letter-spacing:-0.453px;">Returning Visitors</div>
<div class="a" style="left:666px;top:341px;width:11px;height:1px;background-image:linear-gradient(90deg,#8a8a8a 50%,transparent 50%);background-size:2px 1px"></div>
<svg class="a" style="left:677px;top:336px;" width="15" height="9" viewBox="0 0 15 9"><rect x="0.5" y="0.5" width="14" height="8" fill="#fff" stroke="#7584a4"/><rect x="4.5" y="5.8" width="1.7" height="1.7" fill="#1a2440"/><path d="M11.6 3.5H8.5V7.5H11.6M8.5 5.5H11.2" fill="none" stroke="#1a2440" stroke-width="1"/></svg>
<div class="t" style="left:697.60px;top:336.00px;font-size:11.25px;color:#101010;letter-spacing:-0.464px;">Pageview</div>
<div class="a" style="left:666px;top:357px;width:11px;height:1px;background-image:linear-gradient(90deg,#8a8a8a 50%,transparent 50%);background-size:2px 1px"></div>
<svg class="a" style="left:677px;top:352px;" width="15" height="9" viewBox="0 0 15 9"><rect x="0.5" y="0.5" width="14" height="8" fill="#fff" stroke="#7584a4"/><rect x="4.5" y="5.8" width="1.7" height="1.7" fill="#1a2440"/><path d="M11.6 3.5H8.5V7.5H11.6M8.5 5.5H11.2" fill="none" stroke="#1a2440" stroke-width="1"/></svg>
<div class="t" style="left:697.60px;top:352.00px;font-size:11.5px;color:#101010;letter-spacing:-0.435px;">Page / Session</div>
<div class="a" style="left:666px;top:373px;width:11px;height:1px;background-image:linear-gradient(90deg,#8a8a8a 50%,transparent 50%);background-size:2px 1px"></div>
<svg class="a" style="left:677px;top:368px;" width="15" height="9" viewBox="0 0 15 9"><rect x="0.5" y="0.5" width="14" height="8" fill="#fff" stroke="#7584a4"/><rect x="4.5" y="5.8" width="1.7" height="1.7" fill="#1a2440"/><path d="M11.6 3.5H8.5V7.5H11.6M8.5 5.5H11.2" fill="none" stroke="#1a2440" stroke-width="1"/></svg>
<div class="t" style="left:697.60px;top:368.00px;font-size:11.25px;color:#101010;letter-spacing:-0.437px;">Number of Sessions per User</div>
<div class="a" style="left:695px;top:381px;width:56px;height:16px;background:#ececec;"></div>
<div class="a" style="left:666px;top:389px;width:11px;height:1px;background-image:linear-gradient(90deg,#8a8a8a 50%,transparent 50%);background-size:2px 1px"></div>
<svg class="a" style="left:677px;top:384px;" width="15" height="9" viewBox="0 0 15 9"><rect x="0.5" y="0.5" width="14" height="8" fill="#fff" stroke="#7584a4"/><rect x="4.5" y="5.8" width="1.7" height="1.7" fill="#1a2440"/><path d="M11.6 3.5H8.5V7.5H11.6M8.5 5.5H11.2" fill="none" stroke="#1a2440" stroke-width="1"/></svg>
<div class="t" style="left:697.60px;top:384.00px;font-size:11.25px;color:#101010;letter-spacing:-0.513px;">New Users</div>
<div class="a" style="left:666px;top:405px;width:11px;height:1px;background-image:linear-gradient(90deg,#8a8a8a 50%,transparent 50%);background-size:2px 1px"></div>
<svg class="a" style="left:677px;top:400px;" width="15" height="9" viewBox="0 0 15 9"><rect x="0.5" y="0.5" width="14" height="8" fill="#fff" stroke="#7584a4"/><text x="1.8" y="7.5" font-size="8" font-family="Liberation Sans" fill="#1a2440" font-weight="bold" textLength="11.4" lengthAdjust="spacingAndGlyphs">abc</text></svg>
<div class="t" style="left:697.60px;top:400.00px;font-size:11.0px;color:#101010;letter-spacing:-0.413px;">Month</div>
<div class="a" style="left:666px;top:421px;width:11px;height:1px;background-image:linear-gradient(90deg,#8a8a8a 50%,transparent 50%);background-size:2px 1px"></div>
<svg class="a" style="left:677px;top:416px;" width="15" height="9" viewBox="0 0 15 9"><rect x="0.5" y="0.5" width="14" height="8" fill="#fff" stroke="#7584a4"/><circle cx="7.5" cy="4.5" r="3.2" fill="none" stroke="#1a2440" stroke-width="1.1"/><path d="M7.5 2.3V4.8H9.3" fill="none" stroke="#1a2440" stroke-width="0.9"/></svg>
<div class="t" style="left:697.60px;top:416.00px;font-size:11.0px;color:#101010;letter-spacing:-0.550px;">Date</div>
<div class="a" style="left:666px;top:437px;width:11px;height:1px;background-image:linear-gradient(90deg,#8a8a8a 50%,transparent 50%);background-size:2px 1px"></div>
<svg class="a" style="left:677px;top:432px;" width="15" height="9" viewBox="0 0 15 9"><rect x="0.5" y="0.5" width="14" height="8" fill="#fff" stroke="#7584a4"/><rect x="4.5" y="5.8" width="1.7" height="1.7" fill="#1a2440"/><path d="M11.6 3.5H8.5V7.5H11.6M8.5 5.5H11.2" fill="none" stroke="#1a2440" stroke-width="1"/></svg>
<div class="t" style="left:697.60px;top:432.00px;font-size:11.5px;color:#101010;letter-spacing:-0.500px;">Bounce Rate</div>
<div class="a" style="left:666px;top:453px;width:11px;height:1px;background-image:linear-gradient(90deg,#8a8a8a 50%,transparent 50%);background-size:2px 1px"></div>
<svg class="a" style="left:677px;top:448px;" width="15" height="9" viewBox="0 0 15 9"><rect x="0.5" y="0.5" width="14" height="8" fill="#fff" stroke="#7584a4"/><rect x="4.5" y="5.8" width="1.7" height="1.7" fill="#1a2440"/><path d="M11.6 3.5H8.5V7.5H11.6M8.5 5.5H11.2" fill="none" stroke="#1a2440" stroke-width="1"/></svg>
<div class="t" style="left:697.60px;top:448.00px;font-size:11.5px;color:#101010;letter-spacing:-0.475px;">Avg. Session Duration</div>
<div class="a" style="left:609px;top:469px;width:11px;height:1px;background-image:linear-gradient(90deg,#8a8a8a 50%,transparent 50%);background-size:2px 1px"></div>
<svg class="a" style="left:620px;top:464px;" width="15" height="9" viewBox="0 0 15 9"><rect x="0.5" y="0.5" width="14" height="8" fill="#fff" stroke="#7584a4"/><rect x="0" y="0" width="1.6" height="9" fill="#4a82c4"/><text x="3" y="7" font-size="6.5" font-family="Liberation Sans" font-weight="bold" fill="#1a2440" textLength="10.5" lengthAdjust="spacingAndGlyphs">VAR</text></svg>
<div class="t" style="left:640.10px;top:464.00px;font-size:11.25px;color:#101010;letter-spacing:-0.494px;">Variables</div>
<svg class="a" style="left:604px;top:481px;" width="9" height="9" viewBox="0 0 9 9"><rect x="0.5" y="0.5" width="8" height="8" rx="1" fill="url(#eg)" stroke="#8e8e8e"/><path d="M2 4.5H7" stroke="#3a4a9a" stroke-width="1.2"/><path d="M4.5 2V7" stroke="#3a4a9a" stroke-width="1.2"/></svg>
<div class="a" style="left:613px;top:485px;width:7px;height:1px;background-image:linear-gradient(90deg,#8a8a8a 50%,transparent 50%);background-size:2px 1px"></div>
<div class="t" style="left:640.10px;top:480.00px;font-size:11.25px;color:#101010;letter-spacing:-0.513px;">System Variables</div>
<svg class="a" style="left:604px;top:497px;" width="9" height="9" viewBox="0 0 9 9"><rect x="0.5" y="0.5" width="8" height="8" rx="1" fill="url(#eg)" stroke="#8e8e8e"/><path d="M2 4.5H7" stroke="#3a4a9a" stroke-width="1.2"/><path d="M4.5 2V7" stroke="#3a4a9a" stroke-width="1.2"/></svg>
<div class="a" style="left:613px;top:501px;width:7px;height:1px;background-image:linear-gradient(90deg,#8a8a8a 50%,transparent 50%);background-size:2px 1px"></div>
<div class="t" style="left:640.10px;top:496.00px;font-size:11.25px;color:#101010;letter-spacing:-0.475px;">Functions</div>
<svg class="a" style="left:604px;top:513px;" width="9" height="9" viewBox="0 0 9 9"><rect x="0.5" y="0.5" width="8" height="8" rx="1" fill="url(#eg)" stroke="#8e8e8e"/><path d="M2 4.5H7" stroke="#3a4a9a" stroke-width="1.2"/><path d="M4.5 2V7" stroke="#3a4a9a" stroke-width="1.2"/></svg>
<div class="a" style="left:613px;top:517px;width:7px;height:1px;background-image:linear-gradient(90deg,#8a8a8a 50%,transparent 50%);background-size:2px 1px"></div>
<div class="t" style="left:640.10px;top:512.00px;font-size:11.25px;color:#101010;letter-spacing:-0.456px;">Resources</div>
<svg class="a" style="left:620px;top:480px;" width="15" height="9" viewBox="0 0 15 9"><rect x="0.5" y="0.5" width="14" height="8" fill="#fff" stroke="#7584a4"/><rect x="0" y="0" width="1.6" height="9" fill="#4a82c4"/><text x="3.5" y="7" font-size="7" font-family="Liberation Sans" font-weight="bold" fill="#1a2440" textLength="9.5" lengthAdjust="spacingAndGlyphs">Σ#</text></svg>
<svg class="a" style="left:620px;top:494px;" width="15" height="15" viewBox="0 0 15 15"><text x="1" y="11.5" font-size="14" font-family="Liberation Serif" font-style="italic" fill="#333" textLength="12.5" lengthAdjust="spacingAndGlyphs">fx</text></svg>
<svg class="a" style="left:619px;top:511px;" width="16" height="16" viewBox="0 0 16 16"><path d="M3.5 0.5H11L14.5 4V14.5H3.5Z" fill="#fff" stroke="#6d6d6d"/><path d="M11 0.5V4H14.5" fill="none" stroke="#6d6d6d"/><rect x="0.5" y="2.5" width="8" height="9" fill="#fff" stroke="#6d6d6d"/><path d="M2.5 5H6.5M2.5 7H6.5M2.5 9H6.5" stroke="#3f78bf" stroke-width="1"/></svg>
<svg class="a" style="left:601.5px;top:546px;" width="17" height="16" viewBox="0 0 17 16"><rect x="0.5" y="5.5" width="14" height="10" fill="#fff" stroke="#6d6d6d"/><path d="M2.5 8.5H7M8.5 8.5H12.5M2.5 11H7M8.5 11H12.5M2.5 13.5H7M8.5 13.5H12.5" stroke="#6f9ad6" stroke-width="0.9"/><path d="M5 6C4.5 3 7 0.5 10 1C12 1.3 13 2.5 13.5 4L11 6Z" fill="#e5b86a"/><path d="M13.5 0.5L16 0.5L15 4Z" fill="#3aa34a"/></svg>
<div class="t" style="left:625.30px;top:549.00px;font-size:11.0px;color:#101010;letter-spacing:-0.461px;">Properties</div>
<div class="a" style="left:680px;top:543px;width:1px;height:23px;background:#d0d0d0;"></div>
<svg class="a" style="left:685px;top:548px;" width="15" height="12" viewBox="0 0 15 12"><rect x="5.5" y="0.5" width="9" height="7" fill="#fff" stroke="#6d6d6d"/><rect x="5.5" y="0.5" width="9" height="2.5" fill="#3f78bf"/><rect x="0.5" y="4.5" width="9" height="7" fill="#fff" stroke="#6d6d6d"/><rect x="0.5" y="4.5" width="9" height="2.5" fill="#3f78bf"/><path d="M2 9H3M4.5 9H5.5M7 9H8" stroke="#8fb0e0"/></svg>
<div class="t" style="left:707.40px;top:549.00px;font-size:11.25px;color:#3b5ea8;letter-spacing:-0.494px;">Dictionary</div>
<div class="a" style="left:680px;top:562px;width:82px;height:2px;background:#2b579a;"></div>
<div class="a" style="left:761px;top:540px;width:1px;height:23px;background:#d0d0d0;"></div>
<svg class="a" style="left:766px;top:546px;" width="17" height="16" viewBox="0 0 17 16"><rect x="0.5" y="0.5" width="15.5" height="15" fill="#fff" stroke="#6d6d6d"/><path d="M4 3.5H7M5 3.5V12.5H8M5 8H8" fill="none" stroke="#3f78bf" stroke-width="1"/><path d="M8.5 8H12M8.5 12.5H12" stroke="#3f78bf" stroke-width="1.5"/><rect x="7" y="2.5" width="5" height="2" fill="#3f78bf"/></svg>
<div class="t" style="left:789.10px;top:549.00px;font-size:11.5px;color:#101010;letter-spacing:-0.465px;">Report Tree</div>
<div class="a" style="left:247px;top:188px;width:340px;height:238px;background:#fff;box-shadow:0 0 9px 2px rgba(0,0,0,.26),0 2px 22px 4px rgba(0,0,0,.10)"></div>
<div class="a" style="left:247px;top:188px;width:340px;height:238px;background:#fff;border:1px solid #2b88d8;"></div>
<div class="t" style="left:256.40px;top:198.00px;font-size:12.25px;color:#000;letter-spacing:-0.510px;">Date Picker</div>
<div class="t" style="left:515.50px;top:197.00px;font-size:12px;color:#000;">?</div>
<svg class="a" style="left:557.5px;top:198px;" width="11" height="11" viewBox="0 0 11 11"><path d="M0.5 0.5L10.5 10.5M10.5 0.5L0.5 10.5" stroke="#111" stroke-width="1.2"/></svg>
<div class="t" style="left:263.10px;top:243.00px;font-size:11.25px;color:#6d6d6d;letter-spacing:-0.487px;">Value</div>
<div class="a" style="left:260px;top:263px;width:314px;height:33px;background:#fff;border:1px solid #a6a6a6;"></div>
<div class="a" style="left:262px;top:265px;width:310px;height:29px;background:#0074d7;"></div>
<div class="t" style="left:269.60px;top:275.00px;font-size:11.0px;color:#fff;letter-spacing:-0.517px;">Date</div>
<div class="t" style="left:263.20px;top:316.00px;font-size:10.5px;color:#6d6d6d;letter-spacing:-0.487px;">Field</div>
<div class="t" style="left:263.20px;top:355.00px;font-size:11.5px;color:#6d6d6d;letter-spacing:-0.496px;">Selection Mode</div>
<div class="t" style="left:262.70px;top:394.00px;font-size:11.25px;color:#6d6d6d;letter-spacing:-0.519px;">Condition</div>
<div class="a" style="left:386px;top:312px;width:188px;height:25px;background:#f2f2f2;border:1px solid #a6a6a6;"></div>
<div class="t" style="left:390.20px;top:320.00px;font-size:11.5px;color:#000;letter-spacing:-0.467px;">SiteStatistics.Date</div>
<div class="a" style="left:529px;top:314px;width:21px;height:21px;background:#e6e6e6;border:1px solid #b4b4b4;"></div>
<svg class="a" style="left:531px;top:316px;" width="17" height="17" viewBox="0 0 17 17"><path d="M3.5 13.5L12.5 4.5" stroke="#3f78bf" stroke-width="2.6"/><path d="M11 3L13 1L16 4L14 6Z" fill="#3f78bf"/><path d="M2.3 14.7L3 12L5 14Z" fill="#3f78bf"/></svg>
<div class="a" style="left:551px;top:314px;width:21px;height:21px;background:#e6e6e6;border:1px solid #b4b4b4;"></div>
<svg class="a" style="left:556.5px;top:321.5px;" width="11" height="7" viewBox="0 0 11 7"><path d="M0.7 0.8L5.5 5.5L10.3 0.8" fill="none" stroke="#222" stroke-width="1.1"/></svg>
<div class="a" style="left:386px;top:349px;width:188px;height:21px;background:#e1e1e1;border:1px solid #adadad;"></div>
<div class="t" style="left:390.20px;top:355.00px;font-size:10.75px;color:#000;letter-spacing:-0.500px;">Single</div>
<svg class="a" style="left:559px;top:356px;" width="11" height="7" viewBox="0 0 11 7"><path d="M0.7 0.8L5.5 5.5L10.3 0.8" fill="none" stroke="#222" stroke-width="1.1"/></svg>
<div class="a" style="left:386px;top:387px;width:188px;height:21px;background:#e1e1e1;border:1px solid #adadad;"></div>
<div class="t" style="left:389.40px;top:393.00px;font-size:11.5px;color:#000;letter-spacing:-0.448px;">Greater than or equal to</div>
<svg class="a" style="left:559px;top:394px;" width="11" height="7" viewBox="0 0 11 7"><path d="M0.7 0.8L5.5 5.5L10.3 0.8" fill="none" stroke="#222" stroke-width="1.1"/></svg>
<svg class="a" style="left:576px;top:259px;" width="61" height="40" viewBox="0 0 61 40"><path d="M0.4 19.8L28.6 0.1V10.1H60V29.9H28.6V39.7Z" fill="#ef6e79"/></svg>
<div class="a" style="left:1px;top:568px;width:897px;height:31px;background:#2b579a;"></div>
<div class="a" style="left:1px;top:568px;width:897px;height:1px;background:#1f4b92;"></div>
<div class="a" style="left:1px;top:598px;width:897px;height:1px;background:#1f4b92;"></div>
<svg class="a" style="left:15px;top:579.5px;" width="7" height="10" viewBox="0 0 7 10"><path d="M0 0L6.5 4.7L0 9.3Z" fill="#fff"/></svg>
<div class="t" style="left:31.30px;top:578.00px;font-size:12.25px;color:#fff;letter-spacing:-0.450px;">Check for Issues</div>
<div class="a" style="left:124px;top:574px;width:1px;height:19px;background:#8fa6cc;"></div>
<div class="t" style="left:132.00px;top:578.00px;font-size:12.25px;color:#fff;letter-spacing:-0.550px;">DatePicker1</div>
<div class="a" style="left:202px;top:574px;width:1px;height:19px;background:#8fa6cc;"></div>
<div class="t" style="left:207.00px;top:578.00px;font-size:11.75px;color:#fff;letter-spacing:-0.490px;">X:0.00</div>
<div class="t" style="left:244.50px;top:578.00px;font-size:11.75px;color:#fff;letter-spacing:-0.560px;">Y:0.00</div>
<div class="t" style="left:281.30px;top:578.00px;font-size:12.25px;color:#fff;letter-spacing:-0.473px;">Width:680.00</div>
<div class="t" style="left:355.50px;top:578.00px;font-size:12.5px;color:#fff;letter-spacing:-0.509px;">Height:40.00</div>
<div class="a" style="left:524px;top:573px;width:1px;height:22px;background:#8fa6cc;"></div>
<svg class="a" style="left:539px;top:576px;" width="16" height="15" viewBox="0 0 16 15"><rect x="0.75" y="0.75" width="14.5" height="13.5" fill="none" stroke="#fff" stroke-width="1.5"/><path d="M4.5 4.5H11.5M4.5 7.5H11.5M4.5 10.5H11.5" stroke="#fff" stroke-width="1.2"/><path d="M1.3 7.5L3.6 5.3V9.7Z M14.7 7.5L12.4 5.3V9.7Z" fill="#fff"/></svg>
<svg class="a" style="left:575px;top:576px;" width="16" height="15" viewBox="0 0 16 15"><rect x="0.75" y="0.75" width="14.5" height="13.5" fill="none" stroke="#fff" stroke-width="1.5"/><path d="M3.5 6.5H12.5M3.5 8.5H12.5" stroke="#fff" stroke-width="1"/><path d="M8 2.3L11 5H5Z M8 12.7L11 10H5Z" fill="#fff"/></svg>
<svg class="a" style="left:611px;top:576px;" width="16" height="15" viewBox="0 0 16 15"><rect x="0.75" y="0.75" width="14.5" height="13.5" fill="none" stroke="#fff" stroke-width="1.5"/><rect x="4.5" y="2.5" width="7" height="10" fill="none" stroke="#fff" stroke-width="1"/><path d="M6 4.5H10M6 6.5H10M6 8.5H10M6 10.5H10" stroke="#fff" stroke-width="1"/></svg>
<svg class="a" style="left:647px;top:576px;" width="16" height="15" viewBox="0 0 16 15"><rect x="0.75" y="0.75" width="14.5" height="13.5" fill="none" stroke="#fff" stroke-width="1.5"/><path d="M3.5 5.3L4.6 4.6V10.3M6.6 4.6H8.4V10.2H6.6Z M10.3 4.6H12.1V10.2H10.3Z" fill="none" stroke="#fff" stroke-width="1.1"/></svg>
<div class="t" style="left:692.00px;top:579.00px;font-size:11.25px;color:#fff;letter-spacing:-0.400px;">41%</div>
<div class="a" style="left:740px;top:583px;width:8px;height:2px;background:#fff;"></div>
<div class="a" style="left:752px;top:584px;width:96px;height:1px;background:#6d8dc2;"></div>
<div class="a" style="left:801px;top:580px;width:1px;height:8px;background:#6d8dc2;"></div>
<svg class="a" style="left:769.5px;top:577.5px;" width="8" height="12" viewBox="0 0 8 12"><path d="M0.5 0.5H7.5V8.5L4 11.5L0.5 8.5Z" fill="#fff" stroke="#c8d4e8" stroke-width="0.6"/></svg>
<svg class="a" style="left:851.5px;top:579px;" width="9" height="9" viewBox="0 0 9 9"><path d="M4.5 0V9M0 4.5H9" stroke="#fff" stroke-width="2"/></svg>
<svg class="a" style="left:882.5px;top:587px;" width="12" height="12" viewBox="0 0 12 12"><rect x="8" y="0" width="2.3" height="2.3" fill="#fff"/><rect x="7.4" y="-0.6" width="1.4" height="1.4" fill="#c8bfae"/><rect x="4" y="4" width="2.3" height="2.3" fill="#fff"/><rect x="3.4" y="3.4" width="1.4" height="1.4" fill="#c8bfae"/><rect x="8" y="4" width="2.3" height="2.3" fill="#fff"/><rect x="7.4" y="3.4" width="1.4" height="1.4" fill="#c8bfae"/><rect x="0" y="8" width="2.3" height="2.3" fill="#fff"/><rect x="-0.6" y="7.4" width="1.4" height="1.4" fill="#c8bfae"/><rect x="4" y="8" width="2.3" height="2.3" fill="#fff"/><rect x="3.4" y="7.4" width="1.4" height="1.4" fill="#c8bfae"/><rect x="8" y="8" width="2.3" height="2.3" fill="#fff"/><rect x="7.4" y="7.4" width="1.4" height="1.4" fill="#c8bfae"/></svg>
</body></html>
